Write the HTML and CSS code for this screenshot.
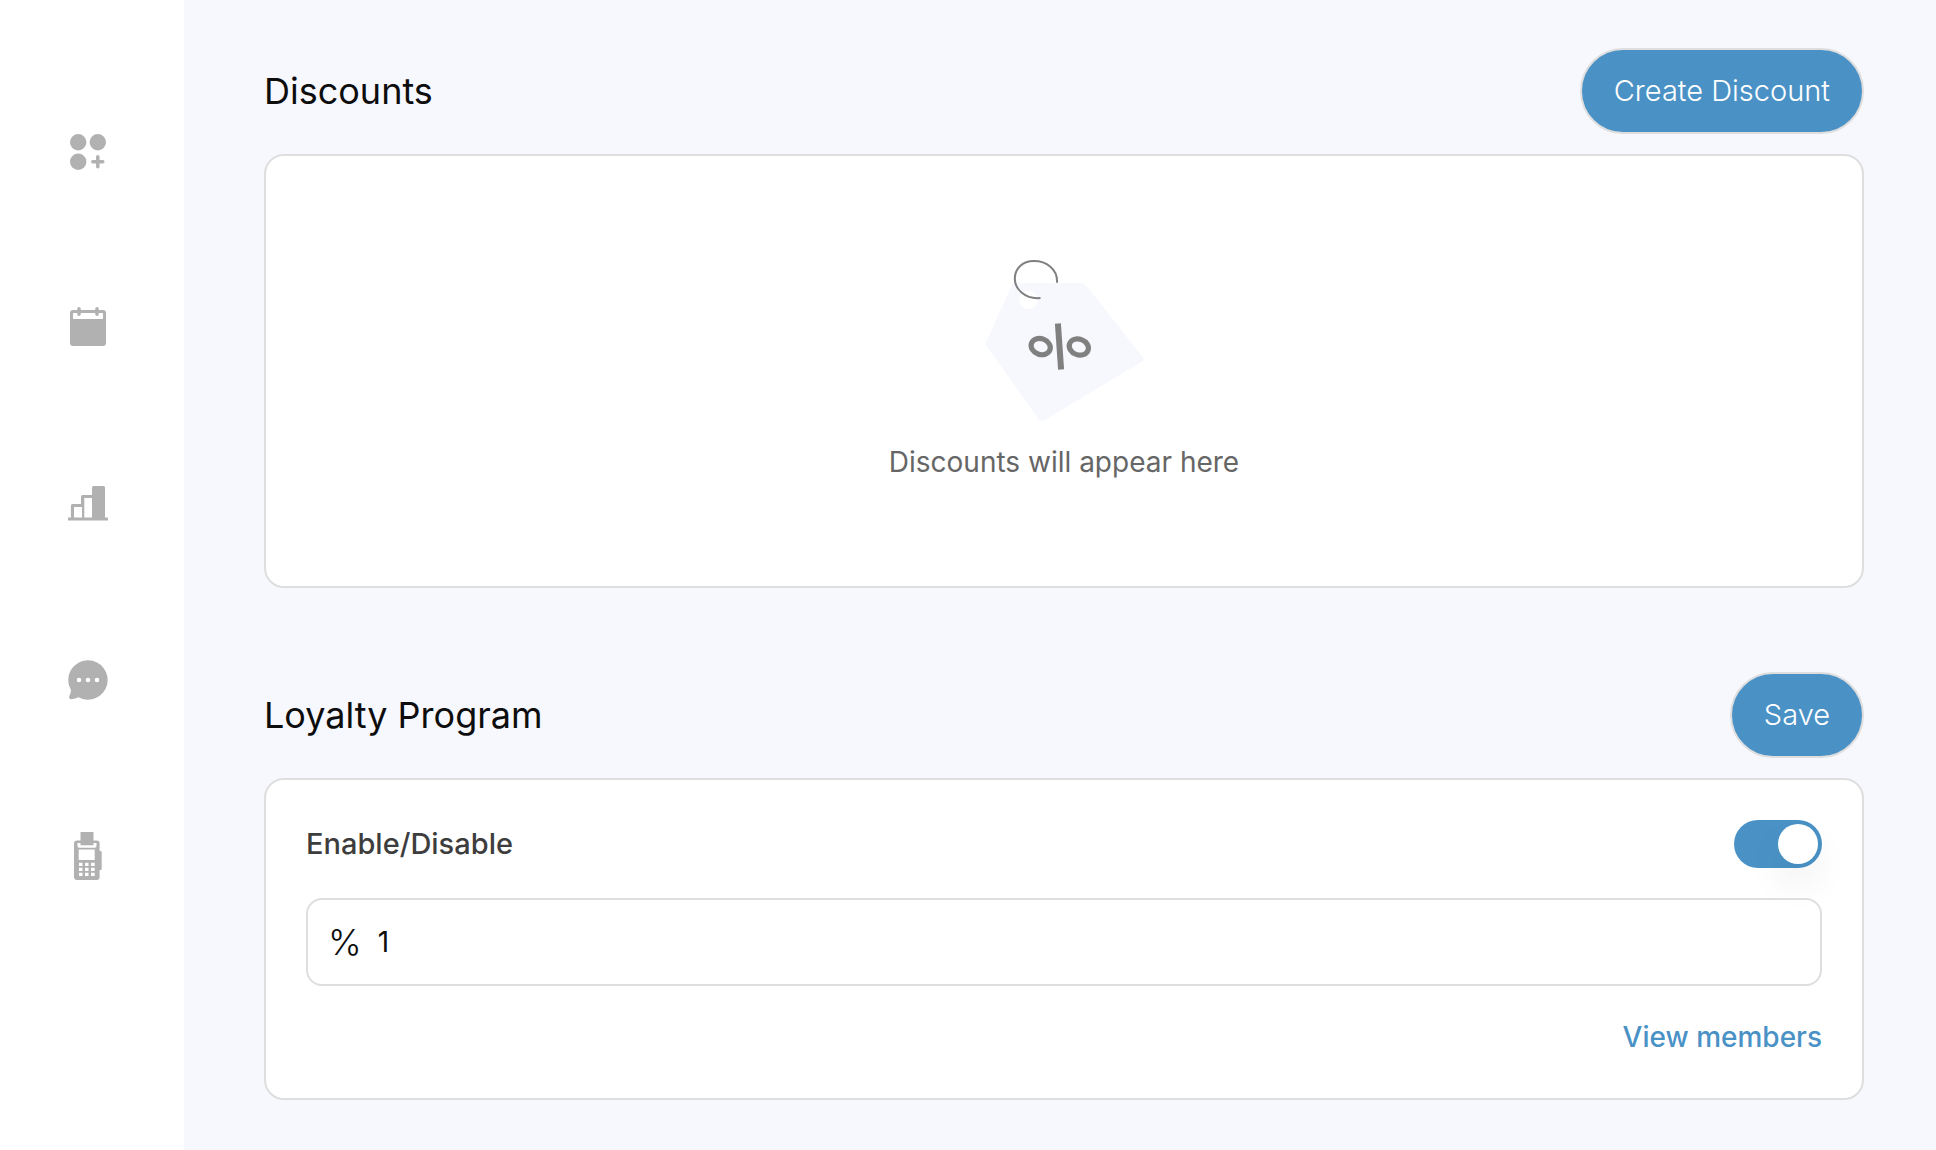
FILE: index.html
```html
<!DOCTYPE html>
<html lang="en">
<head>
  <meta charset="utf-8">
  <meta name="viewport" content="width=device-width, initial-scale=1">
  <title>Discounts</title>
  <link rel="stylesheet" href="styles.css">
</head>
<body>
  <div class="layout">
    <nav class="sidebar" aria-label="Main">
      <a class="nav-link" href="#apps" aria-label="Apps">
        <svg class="nav-icon" viewBox="0 0 48 48" aria-hidden="true">
          <circle cx="14.2" cy="14.2" r="8.2"/>
          <circle cx="33.8" cy="14.2" r="8.2"/>
          <circle cx="14.2" cy="33.8" r="8.2"/>
          <path class="stroke" d="M33.8 28.8v10M28.8 33.8h10"/>
        </svg>
      </a>
      <a class="nav-link" href="#calendar" aria-label="Calendar">
        <svg class="nav-icon" viewBox="0 0 48 48" aria-hidden="true">
          <rect x="6" y="6" width="36" height="36" rx="3"/>
          <rect class="hole" x="9" y="9" width="30" height="6"/>
          <path class="stroke" d="M15 4.8v5.4M33 4.8v5.4"/>
        </svg>
      </a>
      <a class="nav-link" href="#reports" aria-label="Reports">
        <svg class="nav-icon" viewBox="0 0 48 48" aria-hidden="true">
          <path fill-rule="evenodd" d="M4 37.5h2.900V25.500q0-1.500 1.500-1.500H17v-7.500q0-1.500 1.500-1.500H28V7.500Q28 6 29.500 6h10Q41 6 41 7.500v30h3v3H4zM10 27v10.500h8V27zM20.300 18v19.500H28V18z"/>
        </svg>
      </a>
      <a class="nav-link" href="#messages" aria-label="Messages">
        <svg class="nav-icon" viewBox="0 0 48 48" aria-hidden="true">
          <path d="M24 4.300A19.700 19.700 0 1 1 14.500 41.300Q11 42.800 7.300 43.200Q4.800 43 5.200 40.500Q7.200 36.500 6.900 33.800A19.700 19.700 0 0 1 24 4.300z"/>
          <circle class="hole" cx="15" cy="24" r="2.300"/>
          <circle class="hole" cx="24" cy="24" r="2.300"/>
          <circle class="hole" cx="33" cy="24" r="2.300"/>
        </svg>
      </a>
      <a class="nav-link" href="#terminal" aria-label="Terminal">
        <svg class="nav-icon" viewBox="0 0 48 48" aria-hidden="true">
          <rect x="10" y="8.500" width="25.600" height="39.500" rx="3"/>
          <path d="M35 19h1.500q1.200 0 1.200 1.200v16.600q0 1.200-1.200 1.200H35z"/>
          <path class="hole" d="M13.500 11h19v3q0 1.700-1.700 1.700H15.200q-1.700 0-1.700-1.700z"/>
          <path d="M16.500 0h13v13.300h-13z"/>
          <path class="hole" d="M14.700 17.500h16V28h-16zM15 30.800h3.500v3.300H15zM21 30.800h3.500v3.300H21zM27 30.800h3.700v3.300H27zM15 35.800h3.500v3.300H15zM21 35.800h3.500v3.300H21zM27 35.800h3.700v3.300H27zM15 40.800h3.500v3.300H15zM21 40.800h3.500v3.300H21zM27 40.800h3.700v3.300H27z"/>
        </svg>
      </a>
    </nav>

    <main class="content">
      <section class="section">
        <header class="section-header">
          <h1 class="title">Discounts</h1>
          <button class="button" type="button">Create Discount</button>
        </header>
        <div class="card empty">
          <svg class="empty-art" viewBox="0 0 160 160" aria-hidden="true">
            <path class="tag" d="M29.500 23H97q2.500 0 4 1.500l3 3L159 97.500q1.500 2 0 3.500L61 160h-6L2.500 85.500q-1-2 0-4L28 24.500q.5-1.500 1.500-1.500z"/>
            <ellipse class="tag-hole" cx="44.500" cy="40" rx="9.500" ry="9"/>
            <path class="ring" d="M73 22.800C74 9 62 1 50 1C38 1 30.800 9 30.800 18.500C30.800 29 41 39.500 56.500 38"/>
            <path class="bar" d="M73.900 63.500l3.200 46"/>
            <ellipse class="zero" cx="56.700" cy="86.600" rx="9.800" ry="7.900" transform="rotate(20 56.700 86.600)"/>
            <ellipse class="zero" cx="94.800" cy="87" rx="9.800" ry="7.900" transform="rotate(20 94.800 87)"/>
          </svg>
          <p class="empty-text">Discounts will appear here</p>
        </div>
      </section>

      <section class="section">
        <header class="section-header">
          <h2 class="title">Loyalty Program</h2>
          <button class="button" type="submit" form="loyalty">Save</button>
        </header>
        <form class="card loyalty" id="loyalty">
          <div class="toggle-row">
            <label class="toggle-label" for="enabled">Enable/Disable</label>
            <input class="toggle" id="enabled" type="checkbox" role="switch" checked>
          </div>
          <div class="field">
            <label class="field-prefix" for="percent">%</label>
            <input class="field-input" id="percent" type="text" inputmode="numeric" value="1">
          </div>
          <a class="members-link" href="#members">View members</a>
        </form>
      </section>
    </main>
  </div>
</body>
</html>
```
FILE: styles.css
```css
:root {
  --blue: #4a92c6;
  --line: #dedede;
  --page: #f7f8fd;
  --icon: #b1b1b1;
}

* {
  box-sizing: border-box;
}

body {
  margin: 0;
  background: var(--page);
  color: #0d0d0d;
  font-family: Inter, "Liberation Sans", sans-serif;
  font-size: 28px;
  line-height: 40px;
}

.layout {
  display: flex;
  min-height: 100vh;
}

.sidebar {
  display: flex;
  flex: none;
  flex-direction: column;
  gap: 128px;
  padding: 128px 72px 128px 64px;
  background: #fff;
}

.nav-link {
  display: block;
}

.nav-icon {
  display: block;
  width: 48px;
  height: 48px;
  fill: var(--icon);
}

.nav-icon .hole {
  fill: #fff;
}

.nav-icon .stroke {
  stroke: var(--icon);
  stroke-width: 3.5px;
  stroke-linecap: round;
}

.content {
  display: flex;
  flex: 1;
  flex-direction: column;
  gap: 84px;
  min-width: 0;
  padding: 48px 72px 48px 80px;
}

.section {
  display: flex;
  flex-direction: column;
  gap: 20px;
}

.section-header {
  display: flex;
  align-items: center;
  justify-content: space-between;
}

.title {
  margin: 0;
  font-size: 36px;
  font-weight: 400;
  line-height: 48px;
}

.button {
  padding: 21px 32px;
  border: 2px solid var(--line);
  border-radius: 44px;
  background: var(--blue);
  color: #fff;
  font: inherit;
  font-size: 29px;
  font-weight: 300;
  cursor: pointer;
}

.card {
  display: flex;
  flex-direction: column;
  border: 2px solid var(--line);
  border-radius: 20px;
  background: #fff;
}

.empty {
  align-items: center;
  gap: 22px;
  padding: 104px 40px;
}

.empty-art {
  width: 160px;
  height: 160px;
  fill: none;
}

.tag {
  fill: var(--page);
}

.tag-hole {
  fill: #fff;
}

.ring {
  stroke: #808080;
  stroke-width: 2px;
}

.bar {
  stroke: #808080;
  stroke-width: 6px;
}

.zero {
  stroke: #808080;
  stroke-width: 5.2px;
}

.empty-text {
  margin: 0;
  color: #666;
}

.loyalty {
  gap: 30px;
  padding: 40px;
}

.toggle-row {
  display: flex;
  align-items: center;
  justify-content: space-between;
}

.toggle-label {
  color: #3d3d3d;
  font-size: 29px;
  font-weight: 500;
}

.toggle {
  display: flex;
  justify-content: flex-end;
  width: 88px;
  height: 48px;
  margin: 0;
  padding: 4px;
  border-radius: 24px;
  background: var(--blue);
  appearance: none;
  cursor: pointer;
}

.toggle:not(:checked) {
  justify-content: flex-start;
  background: #ccc;
}

.toggle::before {
  width: 40px;
  height: 40px;
  border-radius: 50%;
  background: #fff;
  box-shadow: 0 20px 36px rgba(0, 0, 0, 0.07);
  content: "";
}

.field {
  display: flex;
  align-items: center;
  gap: 16px;
  padding: 22px 20px;
  border: 2px solid var(--line);
  border-radius: 16px;
}

.field-prefix {
  font-size: 36px;
  font-weight: 300;
}

.field-input {
  flex: 1;
  min-width: 0;
  height: 40px;
  padding: 0;
  border: 0;
  outline: 0;
  background: transparent;
  color: inherit;
  font: inherit;
}

.members-link {
  align-self: flex-end;
  color: var(--blue);
  font-weight: 500;
  line-height: 42px;
  text-decoration: none;
}
```
